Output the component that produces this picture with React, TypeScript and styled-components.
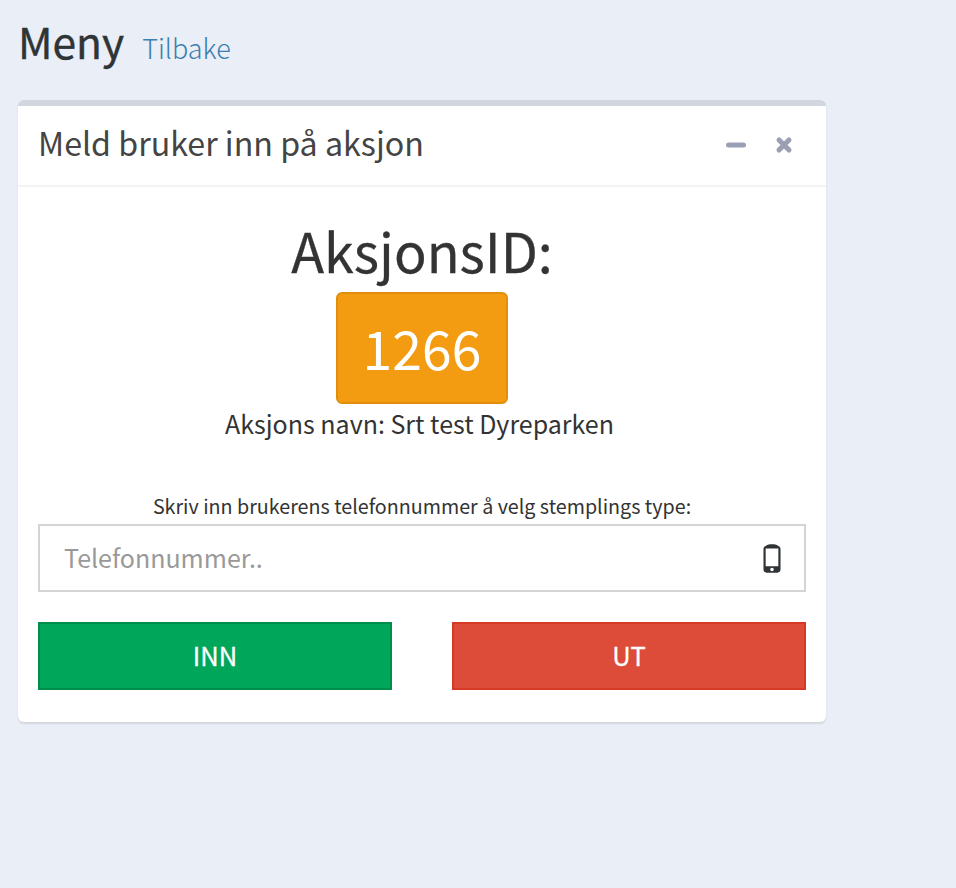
import styled, { createGlobalStyle } from 'styled-components';

const GlobalStyle = createGlobalStyle`
  html, body {
    margin: 0;
    padding: 0;
    background: #eaeef6;
  }
  body {
    font-family: "Noto Sans CJK SC", "Noto Sans", sans-serif;
    color: #333;
  }
  * { box-sizing: border-box; }
`;

const App = () => {
  return (
    <Page>
      <GlobalStyle />
      <PageHeader>
        <PageTitle>Meny</PageTitle>
        <BackLink href="#">Tilbake</BackLink>
      </PageHeader>
      <Box>
        <BoxHeader>
          <BoxTitle>Meld bruker inn på aksjon</BoxTitle>
          <BoxTools>
            <ToolButton aria-label="Minimer">
              <svg width="20" height="24" viewBox="0 0 20 24">
                <path d="M2.500 12h15" stroke="currentColor" strokeWidth="5" strokeLinecap="round" />
              </svg>
            </ToolButton>
            <ToolButton aria-label="Lukk">
              <svg width="20" height="24" viewBox="0 0 20 24">
                <path
                  d="M5 7l10 10M15 7L5 17"
                  stroke="currentColor"
                  strokeWidth="5"
                  strokeLinecap="round"
                />
              </svg>
            </ToolButton>
          </BoxTools>
        </BoxHeader>
        <BoxBody>
          <ActionHeading>AksjonsID:</ActionHeading>
          <ActionBadge>1266</ActionBadge>
          <ActionName>Aksjons navn: Srt test Dyreparken</ActionName>
          <InputLabel>Skriv inn brukerens telefonnummer å velg stemplings type:</InputLabel>
          <InputWrap>
            <PhoneInput placeholder="Telefonnummer.." />
            <PhoneIcon viewBox="0 0 20 32" aria-hidden="true">
              <path
                fill="#2f3437"
                fillRule="evenodd"
                d="M3 2.2C5 .8 7.500 .4 10 .4s5 .4 7 1.800c1.400.6 2.400 1.600 2.400 3.200v22.800c0 2-1.400 3.400-3.400 3.400H4c-2 0-3.400-1.400-3.400-3.400V5.400C.6 3.800 1.600 2.800 3 2.200zM3 5v19.600h14V5H3zm7 21.200a2 2 0 1 0 0 4 2 2 0 0 0 0-4z"
              />
            </PhoneIcon>
          </InputWrap>
          <ButtonRow>
            <ActionButton $variant="in">INN</ActionButton>
            <ActionButton $variant="out">UT</ActionButton>
          </ButtonRow>
        </BoxBody>
      </Box>
    </Page>
  );
};

const Page = styled.div`
  width: 956px;
  min-height: 888px;
  padding: 13px 130px 0 18px;
  background: #eaeef6;
`;

const PageHeader = styled.section`
  display: flex;
  align-items: baseline;
  gap: 18px;
  height: 87px;
`;

const PageTitle = styled.h1`
  margin: 0;
  font-size: 42.5px;
  font-weight: 400;
  line-height: 56px;
  color: #2f3437;
  -webkit-text-stroke: 0.4px #2f3437;
`;

const BackLink = styled.a`
  font-size: 27px;
  font-weight: 300;
  color: #3c7fb0;
  text-decoration: none;
`;

const Box = styled.section`
  height: 622px;
  border-top: 6px solid #d2d6de;
  border-radius: 6px;
  background: #fff;
  box-shadow: 0 2px 2px rgba(0, 0, 0, 0.1);
`;

const BoxHeader = styled.header`
  display: flex;
  align-items: center;
  justify-content: space-between;
  height: 81px;
  padding: 0 32px 0 20px;
  border-bottom: 2px solid #f4f4f4;
`;

const BoxTitle = styled.h3`
  margin: 0 0 8px;
  font-size: 32.2px;
  font-weight: 400;
  color: #444;
`;

const BoxTools = styled.div`
  display: flex;
  gap: 28px;
  margin-bottom: 2px;
`;

const ToolButton = styled.button`
  display: flex;
  align-items: center;
  justify-content: center;
  width: 20px;
  height: 24px;
  padding: 0;
  border: 0;
  background: none;
  color: #9a9fb3;
`;

const BoxBody = styled.div`
  display: flex;
  flex-direction: column;
  align-items: center;
  padding: 20px;
`;

const ActionHeading = styled.h2`
  margin: 7px 0 6px;
  font-size: 54px;
  font-weight: 400;
  line-height: 72px;
  color: #333;
  -webkit-text-stroke: 0.3px #333;
`;

const ActionBadge = styled.div`
  display: flex;
  align-items: center;
  justify-content: center;
  width: 172px;
  height: 112px;
  padding-bottom: 4px;
  border: 2px solid #e08e0b;
  border-radius: 6px;
  background: #f39c12;
  color: #fff;
  font-size: 53.5px;
`;

const ActionName = styled.p`
  margin: 0 5px 0 0;
  font-size: 25px;
  line-height: 38px;
  color: #333;
`;

const InputLabel = styled.label`
  margin-top: 49px;
  font-size: 19.7px;
  line-height: 30px;
  color: #333;
`;

const InputWrap = styled.div`
  position: relative;
  width: 100%;
  height: 68px;
  margin-top: 3px;
`;

const PhoneInput = styled.input`
  width: 100%;
  height: 100%;
  padding: 0 70px 2px 24px;
  border: 2px solid #d2d4d6;
  outline: none;
  font-family: inherit;
  font-size: 25px;
  color: #555;

  &::placeholder {
    color: #999;
    opacity: 1;
  }
`;

const PhoneIcon = styled.svg`
  position: absolute;
  top: 20px;
  right: 24px;
  width: 20px;
  height: 29px;
`;

const ButtonRow = styled.div`
  display: flex;
  justify-content: space-between;
  width: 100%;
  margin-top: 30px;
`;

const ActionButton = styled.button<{ $variant: 'in' | 'out' }>`
  width: 354px;
  height: 68px;
  padding: 0 0 4px;
  border: 2px solid ${({ $variant }) => ($variant === 'in' ? '#008d4c' : '#d73925')};
  background: ${({ $variant }) => ($variant === 'in' ? '#00a65a' : '#dd4b39')};
  color: #fff;
  font-family: inherit;
  font-size: 25.5px;
  -webkit-text-stroke: 0.3px #fff;
`;

export default App;
